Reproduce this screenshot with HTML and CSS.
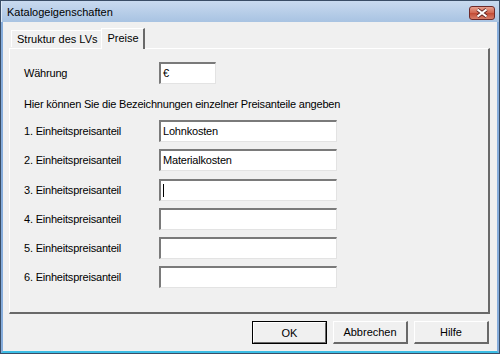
FILE: index.html
```html
<!DOCTYPE html>
<html lang="de">
<head>
    <meta charset="UTF-8">
    <title>Katalogeigenschaften</title>
    <link rel="stylesheet" href="styles.css">
</head>
<body>
    <div class="window">
        <div class="titlebar">
            <span class="title">Katalogeigenschaften</span>
            <button class="close" title="Schließen">
                <svg width="14" height="10" viewBox="0 0 14 10">
                    <path d="M2.5 1.5 L11.5 8.5 M11.5 1.5 L2.5 8.5" stroke="#5a1f1f" stroke-width="3.6"/>
                    <path d="M2.5 1.5 L11.5 8.5 M11.5 1.5 L2.5 8.5" stroke="#ffffff" stroke-width="2.2"/>
                </svg>
            </button>
        </div>
        <div class="client">
            <div class="tabs">
                <div class="tab">Struktur des LVs</div>
                <div class="tab active">Preise</div>
            </div>
            <div class="panel">
                <div class="row">
                    <label>Währung</label>
                    <div class="field short">€</div>
                </div>
                <p class="intro">Hier können Sie die Bezeichnungen einzelner Preisanteile angeben</p>
                <div class="rows">
                    <div class="row">
                        <label>1. Einheitspreisanteil</label>
                        <div class="field">Lohnkosten</div>
                    </div>
                    <div class="row">
                        <label>2. Einheitspreisanteil</label>
                        <div class="field">Materialkosten</div>
                    </div>
                    <div class="row">
                        <label>3. Einheitspreisanteil</label>
                        <div class="field"><span class="caret"></span></div>
                    </div>
                    <div class="row">
                        <label>4. Einheitspreisanteil</label>
                        <div class="field"></div>
                    </div>
                    <div class="row">
                        <label>5. Einheitspreisanteil</label>
                        <div class="field"></div>
                    </div>
                    <div class="row">
                        <label>6. Einheitspreisanteil</label>
                        <div class="field"></div>
                    </div>
                </div>
            </div>
            <div class="buttons">
                <button class="btn default">OK</button>
                <button class="btn">Abbrechen</button>
                <button class="btn">Hilfe</button>
            </div>
        </div>
    </div>
</body>
</html>
```

FILE: styles.css
```css
body {
    margin: 0;
    padding: 0;
    font-family: "Liberation Sans", Arial, sans-serif;
    font-size: 11px;
    color: #000;
    background-color: #f0f0f0;
}
.window {
    width: 500px;
    height: 354px;
    box-sizing: border-box;
    border: 1px solid #3a4d66;
    display: flex;
    flex-direction: column;
    background-color: #f0f0f0;
}
.titlebar {
    height: 21px;
    display: flex;
    align-items: center;
    justify-content: space-between;
    padding: 0 4px 0 5px;
    background: linear-gradient(#c9daef, #a8c3e2);
    border-left: 1px solid #dfeaf7;
}
.title {
    font-size: 11px;
}
.close {
    width: 26px;
    height: 14px;
    margin-top: 2px;
    padding: 0;
    border: 1px solid #6e2a2a;
    border-radius: 3px;
    background: linear-gradient(#e7a08f, #d0654f 50%, #c24a34 51%, #d77e6a);
    display: flex;
    align-items: center;
    justify-content: center;
}
.client {
    flex: 1;
    display: flex;
    flex-direction: column;
    padding: 6px 7px 0 6px;
    border-left: 2px solid #86addc;
    border-right: 2px solid #86addc;
    border-bottom: 2px solid #3cbde4;
}
.tabs {
    display: flex;
    align-items: flex-end;
    height: 20px;
    padding-left: 2px;
    position: relative;
    z-index: 1;
}
.tab {
    height: 17px;
    line-height: 17px;
    padding: 0 4px 0 5px;
    border-top: 1px solid #ffffff;
    border-left: 1px solid #ffffff;
    border-right: 1px solid #a0a0a0;
    box-sizing: border-box;
    background-color: #f0f0f0;
    margin-bottom: 1px;
}
.tab.active {
    height: 21px;
    line-height: 18px;
    padding: 0 4px 0 6px;
    margin-bottom: -1px;
    margin-left: -2px;
    border-right: 2px solid #696969;
    border-bottom: none;
}
.panel {
    height: 266px;
    box-sizing: border-box;
    border-top: 1px solid #ffffff;
    border-left: 1px solid #ffffff;
    border-right: 2px solid #696969;
    border-bottom: 2px solid #696969;
    padding: 13px 0 0 14px;
    letter-spacing: -0.2px;
}
.row {
    display: flex;
    align-items: center;
    height: 22px;
}
.row label {
    width: 135px;
}
.field {
    width: 178px;
    height: 22px;
    box-sizing: border-box;
    background-color: #ffffff;
    border-top: 2px solid #7a7a7a;
    border-left: 2px solid #7a7a7a;
    border-right: 1px solid #e3e3e3;
    border-bottom: 1px solid #e3e3e3;
    padding: 1px 0 0 2px;
    line-height: 17px;
}
.field.short {
    width: 57px;
}
.caret {
    display: inline-block;
    width: 1px;
    height: 13px;
    margin-top: 2px;
    vertical-align: top;
    background-color: #000;
}
.intro {
    margin: 12px 0 8px 0;
    line-height: 16px;
}
.rows {
    display: flex;
    flex-direction: column;
    gap: 7.3px;
}
.buttons {
    display: flex;
    justify-content: flex-end;
    gap: 6px;
    padding-top: 7px;
    padding-right: 1px;
}
.btn {
    width: 75px;
    height: 23px;
    font-family: "Liberation Sans", Arial, sans-serif;
    font-size: 11px;
    background-color: #f0f0f0;
    border-top: 1px solid #ffffff;
    border-left: 1px solid #ffffff;
    border-right: 2px solid #696969;
    border-bottom: 2px solid #696969;
    padding: 0;
}
.btn.default {
    outline: 1px solid #000;
    outline-offset: -1px;
    border-top: 2px solid #ffffff;
    border-left: 2px solid #ffffff;
}
```
